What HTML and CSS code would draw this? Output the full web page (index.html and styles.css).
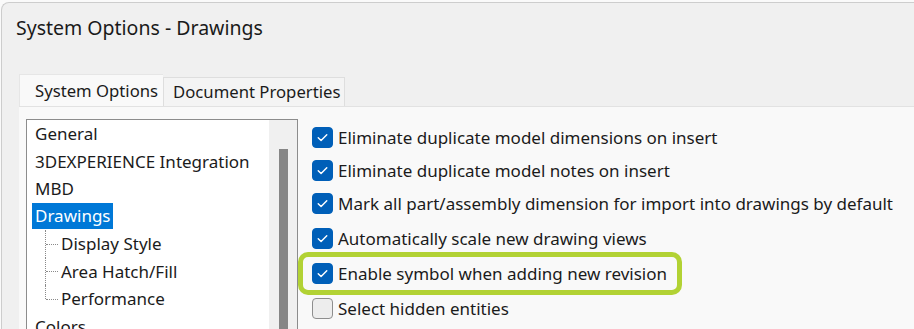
FILE: index.html
```html
<!DOCTYPE html>
<html>
<head>
<meta charset="utf-8">
<link rel="stylesheet" href="styles.css">
</head>
<body>
<div class="window">
  <div class="title">System Options - Drawings</div>
  <div class="tabs">
    <div class="tab active">System Options</div>
    <div class="tab">Document Properties</div>
  </div>
  <div class="panel">
    <div class="tree">
      <ul class="tree-list">
        <li>General</li>
        <li>3DEXPERIENCE Integration</li>
        <li>MBD</li>
        <li class="selected"><span>Drawings</span></li>
        <li class="child">Display Style</li>
        <li class="child">Area Hatch/Fill</li>
        <li class="child last">Performance</li>
        <li>Colors</li>
      </ul>
      <div class="scrollbar"><div class="thumb"></div></div>
    </div>
    <div class="options">
      <div class="opt"><span class="cb checked"><svg viewBox="0 0 20 20"><path d="M5.5 10.2l3 3 6-6.2"/></svg></span><span>Eliminate duplicate model dimensions on insert</span></div>
      <div class="opt"><span class="cb checked"><svg viewBox="0 0 20 20"><path d="M5.5 10.2l3 3 6-6.2"/></svg></span><span>Eliminate duplicate model notes on insert</span></div>
      <div class="opt"><span class="cb checked"><svg viewBox="0 0 20 20"><path d="M5.5 10.2l3 3 6-6.2"/></svg></span><span>Mark all part/assembly dimension for import into drawings by default</span></div>
      <div class="opt gap"><span class="cb checked"><svg viewBox="0 0 20 20"><path d="M5.5 10.2l3 3 6-6.2"/></svg></span><span>Automatically scale new drawing views</span></div>
      <div class="opt gap highlight"><span class="cb checked"><svg viewBox="0 0 20 20"><path d="M5.5 10.2l3 3 6-6.2"/></svg></span><span>Enable symbol when adding new revision</span></div>
      <div class="opt gap"><span class="cb"></span><span>Select hidden entities</span></div>
    </div>
  </div>
</div>
</body>
</html>
```

FILE: styles.css
```css
html, body {
  margin: 0;
  padding: 0;
  height: 100%;
  overflow: hidden;
  background: #fafafa;
  font-family: "Noto Sans", "Open Sans", sans-serif;
  color: #1b1b1b;
}

.window {
  margin: 2px 0 0 1px;
  height: 400px;
  background: #f0f0f0;
  border-top: 1px solid #cdcdcd;
  border-left: 1px solid #cdcdcd;
  border-top-left-radius: 8px;
}

.title {
  height: 50px;
  line-height: 49px;
  padding-left: 14px;
  font-size: 19.5px;
  color: #1a1a1a;
}

.tabs {
  height: 53px;
  display: flex;
  align-items: flex-end;
  padding-left: 17px;
}

.tab {
  box-sizing: border-box;
  font-size: 16.7px;
  padding: 0 4px 0 9px;
  height: 29px;
  line-height: 28px;
  background: #f4f4f4;
  border: 1px solid #dedede;
  border-bottom: none;
}

.tab.active {
  height: 32px;
  line-height: 31px;
  padding: 0 5px 0 15px;
  background: #f9f9f9;
  border-color: #e6e6e6;
  border-right: none;
}

.panel {
  margin-left: 17px;
  height: 300px;
  background: #f9f9f9;
  border-top: 1px solid #e2e2e2;
  display: flex;
  align-items: flex-start;
  padding: 12px 0 0 7px;
}

.tree {
  width: 270px;
  height: 260px;
  border: 1px solid #8c8c8c;
  background: #ffffff;
  display: flex;
}

.tree-list {
  list-style: none;
  margin: 0;
  padding: 0;
  flex: 1;
  font-size: 17px;
}

.tree-list li {
  height: 27.5px;
  line-height: 27.5px;
  padding-left: 8px;
  position: relative;
  white-space: nowrap;
}

.tree-list li.selected {
  padding-left: 5px;
}

.tree-list li.selected span {
  display: inline-block;
  height: 26px;
  line-height: 26px;
  padding: 0 3px;
  background: #0078d7;
  color: #ffffff;
  vertical-align: top;
}

.tree-list li.child {
  padding-left: 34px;
}

.tree-list li.child::before {
  content: "";
  position: absolute;
  left: 18px;
  top: 0;
  height: 100%;
  border-left: 1px dotted #8a8a8a;
}

.tree-list li.child.last::before {
  height: 50%;
}

.tree-list li.child::after {
  content: "";
  position: absolute;
  left: 19px;
  top: 50%;
  width: 12px;
  border-top: 1px dotted #8a8a8a;
}

.scrollbar {
  width: 28px;
  background: #f0f0f0;
  padding: 29px 0 0 10px;
  box-sizing: border-box;
}

.thumb {
  width: 9px;
  height: 300px;
  background: #868686;
}

.options {
  padding: 2px 0 0 14px;
  font-size: 17px;
}

.opt {
  height: 33px;
  display: flex;
  align-items: center;
  white-space: nowrap;
}

.opt.gap {
  margin-top: 2px;
}

.highlight {
  position: relative;
  width: max-content;
}

.highlight::before {
  content: "";
  position: absolute;
  left: -14px;
  right: -15px;
  top: -5px;
  bottom: -5px;
  border: 5px solid #b2d234;
  border-radius: 10px;
}

.cb {
  box-sizing: border-box;
  width: 21px;
  height: 21px;
  border-radius: 4px;
  margin-right: 5px;
  background: #ededed;
  border: 1px solid #8e8e8e;
  flex: none;
}

.cb.checked {
  background: #005fb8;
  border-color: #005fb8;
}

.cb svg {
  display: block;
  width: 19px;
  height: 19px;
  fill: none;
  stroke: #ffffff;
  stroke-width: 1.5;
  stroke-linecap: round;
  stroke-linejoin: round;
}
```
